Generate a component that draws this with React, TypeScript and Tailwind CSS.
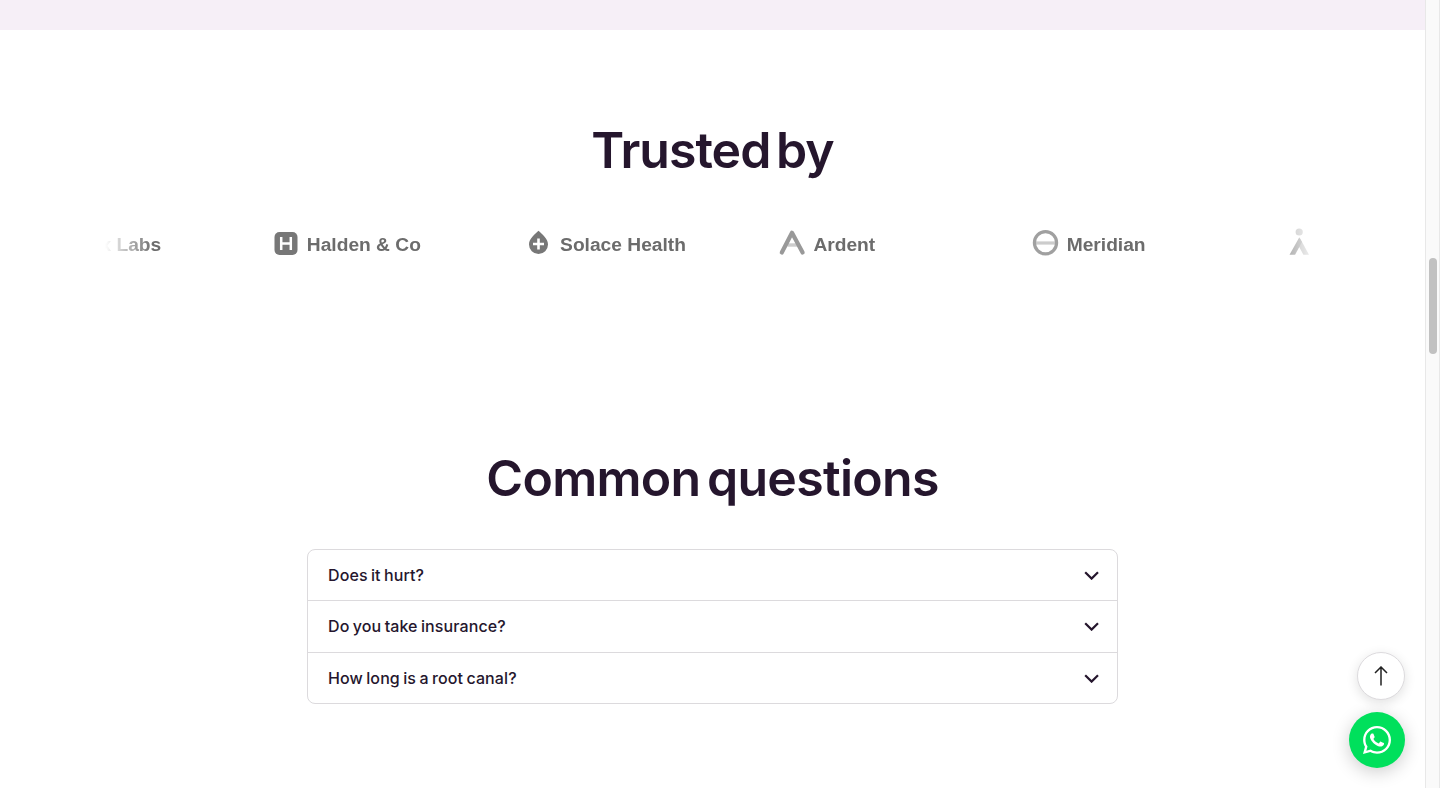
import type { ReactNode } from "react";
import { FaWhatsapp } from "react-icons/fa";

type Partner = { name: string; mark: ReactNode };

const partners: Partner[] = [
  { name: "Vertex Labs", mark: null },
  {
    name: "Halden & Co",
    mark: (
      <>
        <rect x="2.5" y="3" width="23" height="23" rx="5" fill="#777" />
        <path d="M9.2 8v13M18.8 8v13M9.2 14.5h9.6" stroke="#fff" strokeWidth="2.5" />
      </>
    ),
  },
  {
    name: "Solace Health",
    mark: (
      <>
        <path d="M13.5 1.8C17 5.4 23 9.4 23 15.6a9.5 9.5 0 0 1-19 0C4 9.4 10 5.4 13.5 1.8Z" fill="#777" />
        <path d="M13.5 9.5v11M8 15h11" stroke="#fff" strokeWidth="2.6" />
      </>
    ),
  },
  {
    name: "Ardent",
    mark: (
      <>
        <path d="M9.5 16h10" stroke="#ccc" strokeWidth="3.4" />
        <path d="M3.8 23.5 14 3.8 24.6 23.5" fill="none" stroke="#999" strokeWidth="4.2" strokeLinecap="round" strokeLinejoin="round" />
      </>
    ),
  },
  {
    name: "Meridian",
    mark: (
      <>
        <path d="M4 14h19" stroke="#ccc" strokeWidth="3.2" />
        <circle cx="13.5" cy="13.8" r="11.1" fill="none" stroke="#a0a0a0" strokeWidth="3.2" />
      </>
    ),
  },
  {
    name: "Ascend",
    mark: (
      <>
        <circle cx="14.2" cy="3" r="3.6" fill="#b4b4b4" />
        <path d="M14.6 8.5 24 25.8h-5.6L12 14Z" fill="#aaa" />
        <path d="M14.2 8.5 4.5 25.8h5.6L17 13Z" fill="#8a8a8a" />
      </>
    ),
  },
];

const questions = ["Does it hurt?", "Do you take insurance?", "How long is a root canal?"];

function SectionTitle({ children, className }: { children: ReactNode; className: string }) {
  return (
    <h2 className={`text-center font-['Inter',sans-serif] text-[50px] font-semibold leading-[60px] text-[#25162d] ${className}`}>
      {children}
    </h2>
  );
}

function Partners() {
  return (
    <section className="pt-[90px]">
      <SectionTitle className="tracking-[-1px] [word-spacing:-6px]">Trusted by</SectionTitle>
      {/* Logo strip, faded out at both ends */}
      <div className="mx-auto mt-[45px] w-[1216px] overflow-hidden [mask-image:linear-gradient(to_right,transparent,black_4%,black_96%,transparent)]">
        <div className="-ml-[86px] flex w-max">
          {partners.map((partner) => (
            <div key={partner.name} className="flex h-[38px] w-[253.3px] shrink-0 items-center gap-[5px]">
              <svg width="30" height="30" viewBox="0 0 30 30" className="shrink-0 overflow-visible">
                {partner.mark}
              </svg>
              <span className="whitespace-nowrap pt-0.5 font-['Liberation_Sans',sans-serif] text-[19.2px] font-bold text-[#6c6c6c]">
                {partner.name}
              </span>
            </div>
          ))}
        </div>
      </div>
    </section>
  );
}

function Faq() {
  return (
    <section className="pt-[185px]">
      <SectionTitle className="tracking-[-0.7px] [word-spacing:-5.5px]">Common questions</SectionTitle>
      <div className="mx-auto mt-[41px] h-[155px] w-[811px] divide-y divide-[#dcdadd] rounded-lg border border-[#dcdadd]">
        {questions.map((question) => (
          <button
            key={question}
            className="flex h-[51.3px] w-full items-center justify-between pl-5 pr-[18px] text-left font-['Inter',sans-serif] text-base font-medium tracking-[0.1px] text-[#25162d] [word-spacing:-1px]"
          >
            <span>{question}</span>
            <svg width="15" height="9" viewBox="0 0 15 9" fill="none" stroke="#25162d" strokeWidth="2.2">
              <path d="m1.2 1.2 6.4 6.4L14 1.2" />
            </svg>
          </button>
        ))}
      </div>
    </section>
  );
}

export default function App() {
  return (
    <div className="flex h-[788px] overflow-hidden bg-white">
      <main className="w-[1425px] shrink-0">
        <div className="h-[30px] bg-[#f6eff7]" />
        <Partners />
        <Faq />
      </main>

      {/* Scrollbar */}
      <div className="w-[15px] border-x border-x-[#e8e8e8] bg-[#fafafa] pl-[3px] pt-[258px]">
        <div className="h-24 w-2 rounded-full bg-[#c1c1c1]" />
      </div>

      <div className="fixed bottom-5 right-[35px] flex flex-col items-end gap-3">
        <button
          aria-label="Back to top"
          className="flex size-12 items-center justify-center rounded-full border border-[#dcdadd] bg-white shadow-[0_3px_12px_rgba(0,0,0,0.12)]"
        >
          <svg width="14" height="20" viewBox="0 0 14 20" fill="none" stroke="#222" strokeWidth="1.5">
            <path d="M7 19.5V1.2M1 7l6-6 6 6" />
          </svg>
        </button>
        <a
          aria-label="WhatsApp"
          className="flex size-14 items-center justify-center rounded-full bg-[#00e05c] text-white shadow-[0_4px_18px_rgba(0,0,0,0.2)]"
        >
          <FaWhatsapp size={32} />
        </a>
      </div>
    </div>
  );
}
